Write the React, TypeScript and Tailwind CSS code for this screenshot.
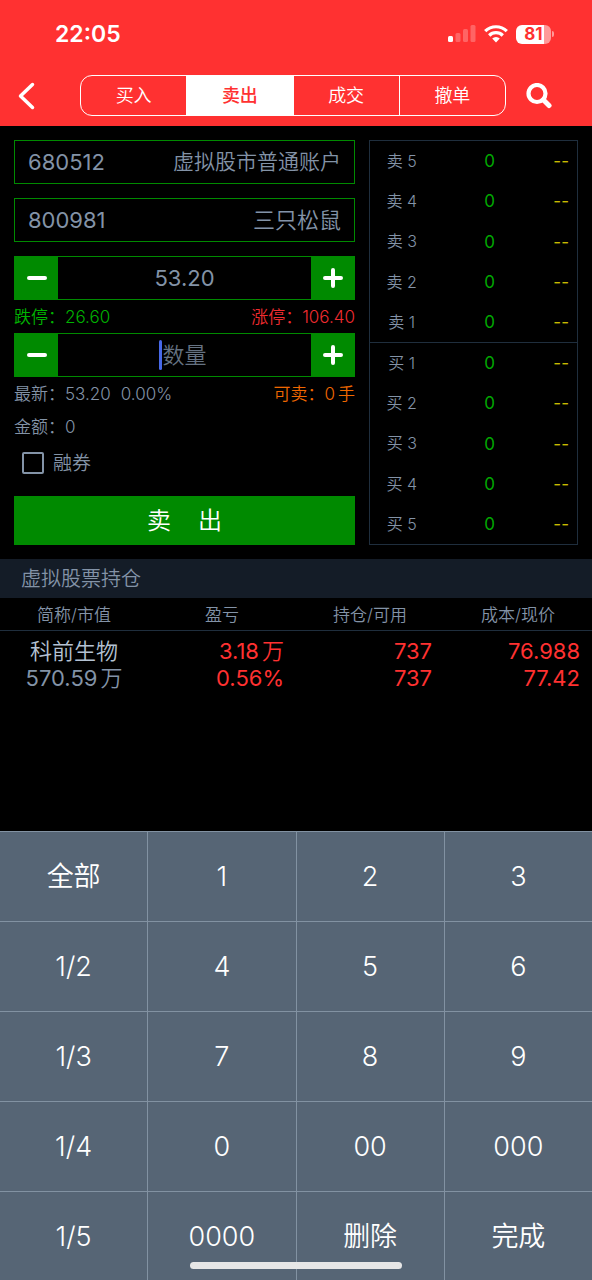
import { useState } from 'react';

const tabs = ['买入', '卖出', '成交', '撤单'];

const asks = ['5', '4', '3', '2', '1'];
const bids = ['1', '2', '3', '4', '5'];

const keys = [
  '全部', '1', '2', '3',
  '1/2', '4', '5', '6',
  '1/3', '7', '8', '9',
  '1/4', '0', '00', '000',
  '1/5', '0000', '删除', '完成',
];

function StatusBar() {
  return (
    <div className="flex h-[68px] items-center justify-between pr-[38px] pl-[55px]">
      <span className="text-[23px] font-semibold">22:05</span>
      <div className="flex items-center gap-2">
        <svg width="28" height="18" viewBox="0 0 28 18" fill="#fff">
          <rect x="0" y="11" width="5" height="6" rx="1.5" />
          <rect x="7.5" y="8" width="5" height="9" rx="1.5" opacity=".25" />
          <rect x="15" y="4" width="5" height="13" rx="1.5" opacity=".25" />
          <rect x="22.5" y="0" width="5" height="17" rx="1.5" opacity=".25" />
        </svg>
        <svg width="24" height="18" viewBox="0 0 24 18" fill="none" stroke="#fff" strokeWidth="3.2">
          <path d="M1.2 6.2a15.300 15.300 0 0 1 21.600 0" />
          <path d="M5.2 10.500a9.600 9.600 0 0 1 13.600 0" />
          <path d="M12 17.500l-3.800-3.900a5.400 5.400 0 0 1 7.600 0z" fill="#fff" stroke="none" />
        </svg>
        <div className="flex items-center gap-px">
          <div className="flex h-[19px] w-[35px] items-center justify-center rounded-md bg-linear-to-r from-white from-80% to-[#ff9a9a] to-80% text-[17px] leading-none font-bold text-[#ff3131]">
            81
          </div>
          <div className="h-[6px] w-[2px] rounded-r-full bg-[#ff9a9a]" />
        </div>
      </div>
    </div>
  );
}

function Stepper({ label, value, onChange, placeholder, caret }: any) {
  const step = (d: number) => onChange(String(Math.max(0, Number(value || 0) + d)));
  return (
    <div className="flex h-11 border border-[#008a00]">
      <button aria-label={`${label}减`} onClick={() => step(-1)} className="flex w-[43px] items-center justify-center bg-[#008a00]">
        <svg width="20" height="20" viewBox="0 0 20 20" stroke="#fff" strokeWidth="4" strokeLinecap="round">
          <path d="M2 10h16" />
        </svg>
      </button>
      <div className="relative min-w-0 flex-1">
        <input
          aria-label={label}
          value={value}
          placeholder={placeholder}
          onChange={(e) => onChange(e.target.value)}
          className="h-full w-full bg-transparent text-center text-[22px] font-normal outline-none placeholder:font-[350] placeholder:text-[#657282]"
        />
        {caret && <span className="absolute top-[6px] left-1/2 -ml-[26px] h-[30px] w-[3px] rounded-full bg-[#4869e8]" />}
      </div>
      <button aria-label={`${label}加`} onClick={() => step(1)} className="flex w-[43px] items-center justify-center bg-[#008a00]">
        <svg width="20" height="20" viewBox="0 0 20 20" stroke="#fff" strokeWidth="4" strokeLinecap="round">
          <path d="M2 10h16M10 2v16" />
        </svg>
      </button>
    </div>
  );
}

function Quote({ side, levels }: { side: string; levels: string[] }) {
  return (
    <tbody>
      {levels.map((n) => (
        <tr key={n} className="h-10">
          <td className="w-[64px] text-center text-base">{side} {n}</td>
          <td className="pt-0.5 text-center font-normal text-[#00a800]">0</td>
          <td className="w-8 pt-0.5 pr-2 text-right font-normal text-[#c8ba00]">--</td>
        </tr>
      ))}
    </tbody>
  );
}

// number followed by its unit, with a narrow gap
function Unit({ value, unit }: { value: string; unit: string }) {
  return (
    <span className="inline-flex items-baseline gap-[3px]">
      <span>{value}</span>
      <span className="font-[350]">{unit}</span>
    </span>
  );
}

export default function App() {
  const [tab, setTab] = useState('卖出');
  const [price, setPrice] = useState('53.20');
  const [amount, setAmount] = useState('');

  const press = (key: string) => {
    if (key === '删除') setAmount(amount.slice(0, -1));
    else if (/^\d+$/.test(key)) setAmount(amount + key);
  };

  return (
    <div className="flex min-h-screen flex-col bg-black font-['Inter','Noto_Sans_CJK_SC',sans-serif] font-[350] text-[#8393a7]">
      <header className="h-[126px] bg-[#ff3131] text-white">
        <StatusBar />
        <div className="flex items-center pt-[7px] pr-10 pl-[18px]">
          <button aria-label="返回" className="w-[62px]">
            <svg width="18" height="28" viewBox="0 0 18 28" fill="none" stroke="#fff" strokeWidth="3.5" strokeLinecap="round" strokeLinejoin="round">
              <path d="M14.5 2.5L2.5 14l12 11.5" />
            </svg>
          </button>
          <nav className="flex h-[41px] flex-1 divide-x divide-white overflow-hidden rounded-xl border border-white">
            {tabs.map((t) => (
              <button
                key={t}
                onClick={() => setTab(t)}
                className={t === tab ? 'flex-1 bg-white text-lg font-medium text-[#ff3131]' : 'flex-1 text-lg'}
              >
                {t}
              </button>
            ))}
          </nav>
          <button aria-label="搜索" className="ml-5">
            <svg width="26" height="26" viewBox="0 0 26 26" fill="none" stroke="#fff">
              <circle cx="11" cy="10.5" r="8.5" strokeWidth="4.2" />
              <path d="M17.5 17l5.5 5.5" strokeWidth="5" strokeLinecap="round" />
            </svg>
          </button>
        </div>
      </header>

      <main className="flex gap-[14px] p-[14px]">
        <section className="flex flex-[341] flex-col">
          <button className="flex h-11 items-center justify-between border border-[#008a00] px-[13px] text-[21px]">
            <span className="text-[22px] font-normal">680512</span>
            <span>虚拟股市普通账户</span>
          </button>
          <label className="my-[14px] flex h-11 items-center justify-between border border-[#008a00] px-[13px] text-[22px]">
            <input aria-label="股票代码" defaultValue="800981" className="w-[120px] bg-transparent font-normal outline-none" />
            <span>三只松鼠</span>
          </label>

          <Stepper label="价格" value={price} onChange={setPrice} />
          <div className="flex h-[33px] items-center justify-between pt-[3px] text-[17px]">
            <span className="text-[#00b400]">跌停：26.60</span>
            <span className="text-[#f02c30]">涨停：106.40</span>
          </div>
          <Stepper label="数量" value={amount} onChange={setAmount} placeholder="数量" caret={!amount} />
          <div className="flex h-[33px] items-center justify-between pt-[3px] text-[17px]">
            <span className="flex gap-[10px]">
              <span>最新：53.20</span>
              <span>0.00%</span>
            </span>
            <span className="text-[#f06800]">
              可卖：<Unit value="0" unit="手" />
            </span>
          </div>
          <div className="flex h-[33px] items-center pt-[3px] text-[17px]">金额：0</div>
          <label className="ml-2 flex h-10 items-center gap-[9px] text-[19px]">
            <input type="checkbox" className="size-[22px] appearance-none rounded-[2px] border-2 border-[#8393a7] checked:bg-[#8393a7]" />
            <span className="pt-[3px]">融券</span>
          </label>
          <button className="mt-[13px] h-[49px] bg-[#008a00] text-2xl whitespace-pre text-white">卖{'    '}出</button>
        </section>

        <div className="flex-[209]">
          <table className="h-full w-full table-fixed border border-[#1f2e3d] text-[17px] [&>tbody+tbody]:border-t [&>tbody+tbody]:border-[#1f2e3d]">
            <Quote side="卖" levels={asks} />
            <Quote side="买" levels={bids} />
          </table>
        </div>
      </main>

      <h2 className="flex h-[39px] items-center bg-[#141c27] pl-[21px] text-[20px] font-[350]">虚拟股票持仓</h2>
      <table className="w-full table-fixed text-[22px] leading-[27px]">
        <thead>
          <tr className="h-8 border-b border-[#1f2e3d] text-[17px]">
            <th className="pt-[3px] font-[350]">简称/市值</th>
            <th className="pt-[3px] font-[350]">盈亏</th>
            <th className="pt-[3px] font-[350]">持仓/可用</th>
            <th className="pt-[3px] font-[350]">成本/现价</th>
          </tr>
        </thead>
        <tbody>
          <tr className="text-right font-normal text-[#ff3131]">
            <td className="pt-[7px] text-center text-[#8393a7]">
              <div className="font-[350] text-[#b4c2d3]">科前生物</div>
              <div><Unit value="570.59" unit="万" /></div>
            </td>
            <td className="pt-[7px] pr-3">
              <div><Unit value="3.18" unit="万" /></div>
              <div>0.56%</div>
            </td>
            <td className="pt-[7px] pr-3">
              <div>737</div>
              <div>737</div>
            </td>
            <td className="pt-[7px] pr-3">
              <div>76.988</div>
              <div>77.42</div>
            </td>
          </tr>
        </tbody>
      </table>

      <div className="relative mt-auto grid grid-cols-4 grid-rows-[repeat(4,89px)_88px] gap-px bg-[#8292a2] pt-px">
        {keys.map((k) => (
          <button key={k} onClick={() => press(k)} className="bg-[#566575] pt-0.5 text-[27px] text-white">
            {k}
          </button>
        ))}
        <div className="pointer-events-none absolute bottom-[11px] left-1/2 h-[7px] w-[212px] -translate-x-1/2 rounded-full bg-[#e6e6e6]" />
      </div>
    </div>
  );
}
